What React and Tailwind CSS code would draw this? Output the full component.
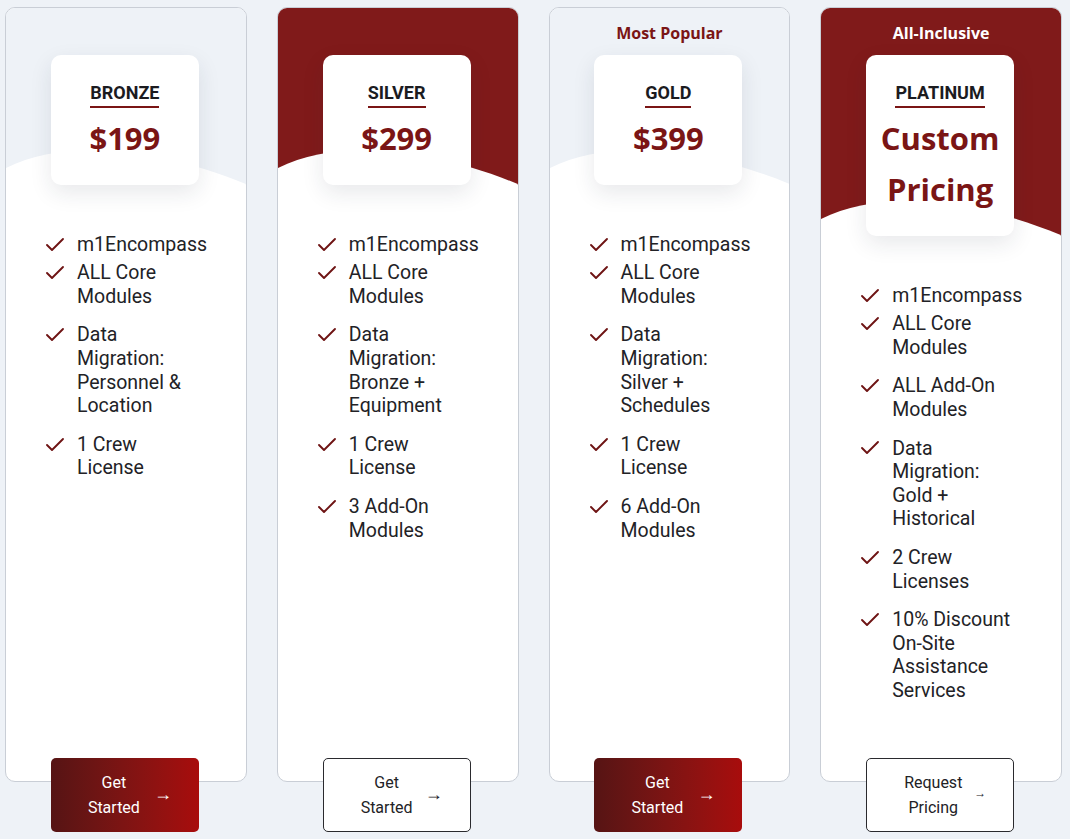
import React from 'react';
import { Check } from 'lucide-react';

const tiers = [
  {
    name: 'BRONZE',
    price: ['$199'],
    red: false,
    features: [['m1Encompass'], ['ALL Core', 'Modules'], ['Data', 'Migration:', 'Personnel &', 'Location'], ['1 Crew', 'License']],
    cta: ['Get', 'Started'],
    solid: true,
  },
  {
    name: 'SILVER',
    price: ['$299'],
    red: true,
    features: [['m1Encompass'], ['ALL Core', 'Modules'], ['Data', 'Migration:', 'Bronze +', 'Equipment'], ['1 Crew', 'License'], ['3 Add-On', 'Modules']],
    cta: ['Get', 'Started'],
    solid: false,
  },
  {
    name: 'GOLD',
    price: ['$399'],
    red: false,
    badge: 'Most Popular',
    features: [['m1Encompass'], ['ALL Core', 'Modules'], ['Data', 'Migration:', 'Silver +', 'Schedules'], ['1 Crew', 'License'], ['6 Add-On', 'Modules']],
    cta: ['Get', 'Started'],
    solid: true,
  },
  {
    name: 'PLATINUM',
    price: ['Custom', 'Pricing'],
    red: true,
    badge: 'All-Inclusive',
    features: [
      ['m1Encompass'],
      ['ALL Core', 'Modules'],
      ['ALL Add-On', 'Modules'],
      ['Data', 'Migration:', 'Gold +', 'Historical'],
      ['2 Crew', 'Licenses'],
      ['10% Discount', 'On-Site', 'Assistance', 'Services'],
    ],
    cta: ['Request', 'Pricing'],
    solid: false,
    small: true,
  },
];

const Wave = () => (
  <svg className="absolute bottom-0 left-0 w-full h-[50px]" viewBox="0 0 241 50" preserveAspectRatio="none">
    <path d="M0 50 L0 33 C60 3 150 12 241 49 L241 50 Z" fill="#ffffff" />
  </svg>
);

const PlanCard = ({ tier }) => (
  <div className="flex flex-col h-[775px] rounded-[10px] border border-[#c9ced6] bg-white">
    <div className={`relative flex flex-col items-center rounded-t-[9px] ${tier.red ? 'bg-[#801a1a]' : 'bg-[#eef2f7]'}`}>
      <div
        className={`h-[47px] pt-[2px] flex items-center justify-center text-[16px] font-bold font-['Open_Sans',sans-serif] ${
          tier.red ? 'text-white' : 'text-[#7a1515]'
        }`}
      >
        {tier.badge}
      </div>
      <Wave />
      <div className="relative z-10 w-[148px] -ml-[2px] flex flex-col items-center rounded-[10px] bg-white pt-[27px] pb-[21px] shadow-[0_8px_22px_rgba(30,40,60,0.10)]">
        <div className="text-[18px] leading-[22px] font-bold text-[#1b1b1f] font-['Roboto',sans-serif] pb-[2px] border-b-2 border-[#7a1515]">
          {tier.name}
        </div>
        <div className="mt-[5px] text-center text-[31px] leading-[51px] font-bold text-[#7a1515] font-['Open_Sans',sans-serif]">
          {tier.price.map((p) => (
            <div key={p}>{p}</div>
          ))}
        </div>
      </div>
    </div>

    <ul className="pt-[48px] pl-[37px] font-['Roboto',sans-serif] text-[19.5px] leading-[23.6px] text-[#222226]">
      {tier.features.map((f, i) => (
        <li key={i} className={`flex gap-[10px] ${i === 0 ? 'mb-[4.6px]' : 'mb-[15px]'}`}>
          <span className="h-[23.6px] flex items-center shrink-0">
            <Check size={24} strokeWidth={1.9} className="text-[#6e1414]" />
          </span>
          <span className="whitespace-nowrap">
            {f.map((line) => (
              <div key={line}>{line}</div>
            ))}
          </span>
        </li>
      ))}
    </ul>

    <div className="mt-auto -mb-[51px] flex justify-center">
      <button
        className={`w-[148px] h-[74px] -ml-[2px] flex items-center justify-between pl-[37px] pr-[27px] rounded-[5px] font-['Roboto',sans-serif] text-[16px] leading-[25px] ${
          tier.solid
            ? 'bg-gradient-to-r from-[#561414] to-[#a80c0c] text-white'
            : 'bg-white border border-[#2a2a2e] text-[#222226]'
        }`}
      >
        <span className="text-center">
          {tier.cta.map((l) => (
            <div key={l}>{l}</div>
          ))}
        </span>
        <span className={`-mt-[3px] ${tier.small ? 'text-[12px]' : 'text-[18px]'}`}>→</span>
      </button>
    </div>
  </div>
);

const App = () => {
  return (
    <div className="min-h-screen w-full bg-[#eef2f7] pt-[7px] pl-[5px] pr-[8px]">
      <div className="grid grid-cols-4 gap-[30px]">
        {tiers.map((t) => (
          <PlanCard key={t.name} tier={t} />
        ))}
      </div>
    </div>
  );
};

export default App;
